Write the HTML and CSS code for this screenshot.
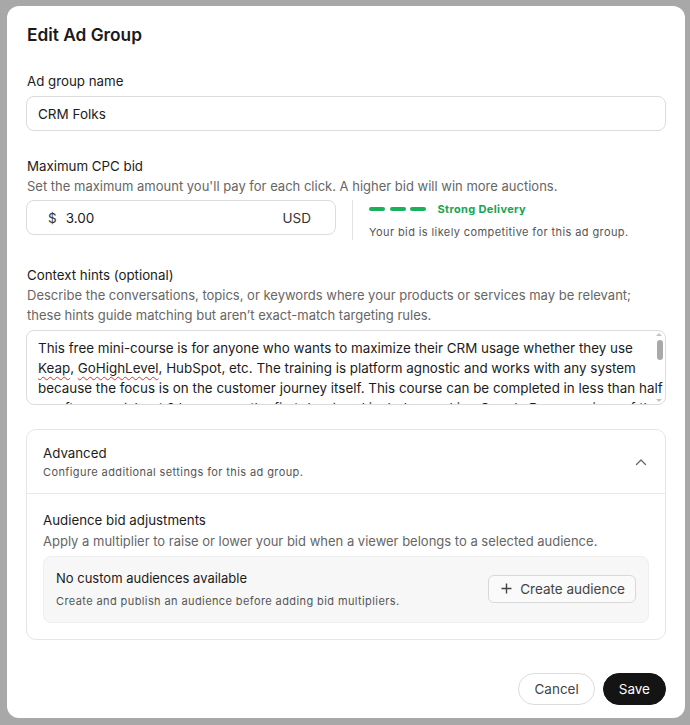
FILE: index.html
```html
<html>
    <head>
        <link rel="stylesheet" href="styles.css">
    </head>
    <body>
        <div class="modal">
            <h1 class="title">Edit Ad Group</h1>

            <div class="field">
                <label class="label">Ad group name</label>
                <div class="input">CRM Folks</div>
            </div>

            <div class="field gapBig">
                <label class="label">Maximum CPC bid</label>
                <p class="desc">Set the maximum amount you'll pay for each click. A higher bid will win more auctions.</p>
                <div class="bidRow">
                    <div class="input bidInput">
                        <span class="dollar">$</span>
                        <span class="amount">3.00</span>
                        <span class="currency">USD</span>
                    </div>
                    <div class="delivery">
                        <div class="deliveryTop">
                            <span class="dash"></span><span class="dash"></span><span class="dash"></span>
                            <span class="strong">Strong Delivery</span>
                        </div>
                        <p class="small">Your bid is likely competitive for this ad group.</p>
                    </div>
                </div>
            </div>

            <div class="field gapMid">
                <label class="label">Context hints (optional)</label>
                <p class="desc">Describe the conversations, topics, or keywords where your products or services may be relevant;<br>these hints guide matching but aren’t exact-match targeting rules.</p>
                <div class="hintsWrap">
                    <div class="hints">This free mini-course is for anyone who wants to maximize their CRM usage whether they use<br><span class="typo">Keap</span>, <span class="typo">GoHighLevel</span>, HubSpot, etc. The training is platform agnostic and works with any system<br>because the focus is on the customer journey itself. This course can be completed in less than half<br>an afternoon (about 2 hours over the first days) and includes working Google Docs versions of the<br>templates so you can follow along and adapt them to your own business.</div>
                    <!-- fake scrollbar, headless hides the native one -->
                    <span class="arrowUp"></span>
                    <span class="thumb"></span>
                    <span class="arrowDown"></span>
                </div>
            </div>

            <div class="advanced">
                <div class="advHead">
                    <div>
                        <div class="advTitle">Advanced</div>
                        <p class="small advSub">Configure additional settings for this ad group.</p>
                    </div>
                    <svg class="chevron" width="12" height="8" viewBox="0 0 12 8"><path d="M1.5 6.5 L6 2 L10.5 6.5" fill="none" stroke="#666" stroke-width="1.3" stroke-linecap="round" stroke-linejoin="round"/></svg>
                </div>
                <div class="advBody">
                    <div class="label">Audience bid adjustments</div>
                    <p class="desc advDesc">Apply a multiplier to raise or lower your bid when a viewer belongs to a selected audience.</p>
                    <div class="emptyBox">
                        <div>
                            <div class="emptyTitle">No custom audiences available</div>
                            <p class="small">Create and publish an audience before adding bid multipliers.</p>
                        </div>
                        <button class="createBtn">
                            <svg width="11" height="11" viewBox="0 0 11 11"><path d="M5.5 0.5 V10.5 M0.5 5.5 H10.5" stroke="#444" stroke-width="1.4"/></svg>
                            Create audience
                        </button>
                    </div>
                </div>
            </div>

            <div class="footer">
                <button class="btn cancel">Cancel</button>
                <button class="btn save">Save</button>
            </div>
        </div>
    </body>
</html>
```

FILE: styles.css
```css
body {
    margin: 0;
    padding: 6px 5px 0 7px;
    background-color: #a8a8a8;
    font-family: Inter, "Noto Sans", sans-serif;
    color: #1c1c1c;
}
p {
    margin: 0;
}
.modal {
    height: 712px;
    box-sizing: border-box;
    background: #fff;
    border-radius: 12px;
    padding: 17px 19px 13px 19px;
    display: flex;
    flex-direction: column;
}
.title {
    margin: 0 0 0 1px;
    font-size: 17.3px;
    line-height: 24px;
    font-weight: 600;
    color: #1a1a1a;
}
.field {
    display: flex;
    flex-direction: column;
    margin-top: 24px;
}
.gapBig {
    margin-top: 25px;
}
.gapMid {
    margin-top: 25px;
}
.label {
    font-size: 13.3px;
    line-height: 20px;
    color: #1c1c1c;
    padding-left: 1px;
}
.desc {
    font-size: 13px;
    line-height: 20px;
    color: #666;
    padding-left: 1px;
}
.small {
    font-size: 11px;
    line-height: 16px;
    letter-spacing: 0.4px;
    color: #555;
}
.input {
    margin-top: 5px;
    height: 35px;
    box-sizing: border-box;
    border: 1px solid #dcdcdc;
    border-radius: 8px;
    padding: 0 11px;
    display: flex;
    align-items: center;
    font-size: 13.5px;
    color: #1c1c1c;
}
.bidRow {
    display: flex;
    margin-top: 4px;
}
.bidInput {
    margin-top: 0;
    width: 310px;
    padding: 0 24px 0 21px;
}
.dollar {
    margin-right: 9px;
    color: #333;
}
.amount {
    flex: 1;
}
.currency {
    color: #333;
}
.delivery {
    margin-left: 16px;
    border-left: 1px solid #e3e3e3;
    padding-left: 16px;
    height: 40px;
}
.deliveryTop {
    display: flex;
    align-items: center;
    height: 18px;
    margin-bottom: 6px;
}
.dash {
    width: 16px;
    height: 4px;
    border-radius: 2px;
    background: #19b25a;
    margin-right: 4.5px;
}
.strong {
    margin-left: 7px;
    font-size: 11px;
    font-weight: 700;
    letter-spacing: 0.35px;
    color: #17a553;
}
.hintsWrap {
    position: relative;
    margin-top: 5px;
}
.hints {
    height: 75px;
    box-sizing: border-box;
    border: 1px solid #dcdcdc;
    border-radius: 8px;
    padding: 7px 14px 0 11px;
    font-size: 13.4px;
    line-height: 20px;
    color: #1c1c1c;
    white-space: nowrap;
    overflow: hidden;
}
.thumb {
    position: absolute;
    right: 3px;
    top: 10px;
    width: 6px;
    height: 20px;
    border-radius: 3px;
    background: #a9a9a9;
}
.arrowUp,
.arrowDown {
    position: absolute;
    right: 4px;
    width: 0;
    height: 0;
    border-left: 3px solid transparent;
    border-right: 3px solid transparent;
}
.arrowUp {
    top: 3px;
    border-bottom: 3px solid #c4c4c4;
}
.arrowDown {
    bottom: 3px;
    border-top: 3px solid #c4c4c4;
}
.typo {
    text-decoration: underline wavy #e0342f;
    text-decoration-thickness: 1px;
    text-underline-offset: 3px;
    text-decoration-skip-ink: none;
}
.advanced {
    margin-top: 24px;
    border: 1px solid #e6e6e6;
    border-radius: 10px;
}
.advHead {
    display: flex;
    justify-content: space-between;
    align-items: center;
    padding: 13px 18px 13px 16px;
    border-bottom: 1px solid #e8e8e8;
}
.advTitle {
    font-size: 13.3px;
    line-height: 20px;
}
.advSub {
    margin-top: 1px;
}
.advBody {
    padding: 16px;
}
.advBody .label,
.advBody .desc {
    padding-left: 0;
}
.advDesc {
    margin-top: 1px;
}
.emptyBox {
    margin-top: 5px;
    background: #f7f7f7;
    border: 1px solid #efefef;
    border-radius: 8px;
    padding: 11px 12px 13px 12px;
    display: flex;
    justify-content: space-between;
    align-items: center;
}
.emptyTitle {
    font-size: 13px;
    line-height: 20px;
    margin-bottom: 5px;
}
.createBtn {
    display: flex;
    align-items: center;
    gap: 8px;
    height: 28px;
    padding: 0 10px 0 12px;
    border: 1px solid #d8d8d8;
    border-radius: 6px;
    background: #fafafa;
    font-family: inherit;
    font-size: 13.5px;
    color: #444;
}
.footer {
    margin-top: auto;
    display: flex;
    justify-content: flex-end;
    gap: 8px;
}
.btn {
    height: 32px;
    border-radius: 16px;
    font-family: inherit;
    font-size: 13.5px;
    padding: 0 15px;
}
.cancel {
    background: #fff;
    border: 1px solid #dcdcdc;
    color: #444;
}
.save {
    background: #141414;
    border: 1px solid #141414;
    color: #fff;
}
```
